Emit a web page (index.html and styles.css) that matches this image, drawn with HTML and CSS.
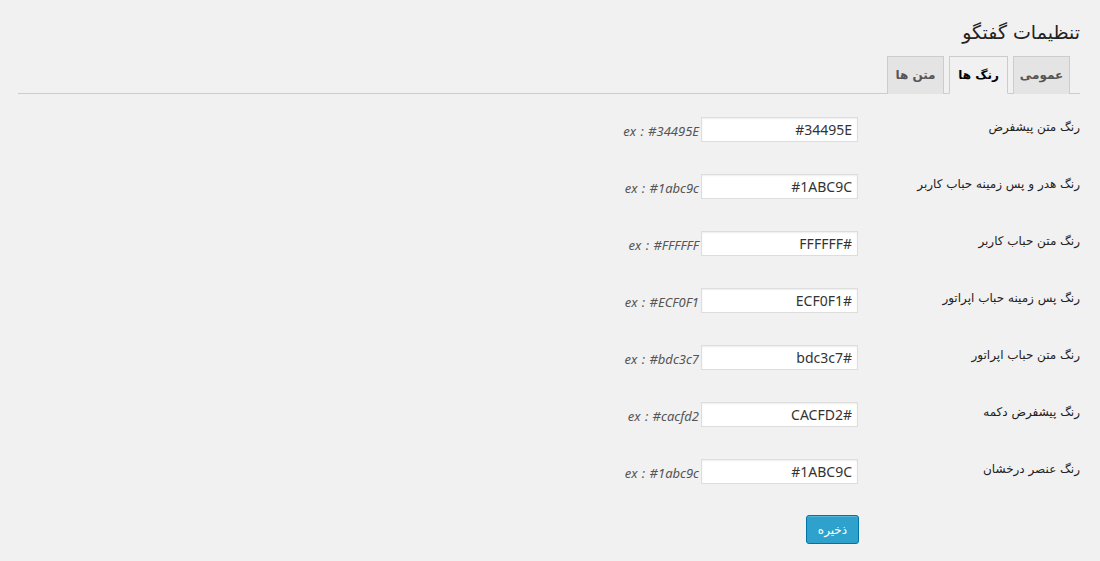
FILE: index.html
```html
<!DOCTYPE html>
<html lang="fa" dir="rtl">
<head>
  <meta charset="UTF-8">
  <title>تنظیمات گفتگو</title>
  <link rel="stylesheet" href="styles.css">
</head>
<body>

  <div class="wrap">
    <h2 class="page-title">تنظیمات گفتگو</h2>

    <div class="nav-tabs">
      <a class="nav-tab">عمومی</a>
      <a class="nav-tab active">رنگ ها</a>
      <a class="nav-tab">متن ها</a>
    </div>

    <!-- Colors tab -->
    <form class="form-table">
      <div class="row">
        <label class="row-label">رنگ متن پیشفرض</label>
        <input class="color-input" type="text" value="#34495E">
        <span class="hint" dir="ltr">ex : #34495E</span>
      </div>
      <div class="row">
        <label class="row-label">رنگ هدر و پس زمینه حباب کاربر</label>
        <input class="color-input" type="text" value="#1ABC9C">
        <span class="hint" dir="ltr">ex : #1abc9c</span>
      </div>
      <div class="row">
        <label class="row-label">رنگ متن حباب کاربر</label>
        <input class="color-input" type="text" value="#FFFFFF">
        <span class="hint" dir="ltr">ex : #FFFFFF</span>
      </div>
      <div class="row">
        <label class="row-label">رنگ پس زمینه حباب  اپراتور</label>
        <input class="color-input" type="text" value="#ECF0F1">
        <span class="hint" dir="ltr">ex : #ECF0F1</span>
      </div>
      <div class="row">
        <label class="row-label">رنگ متن حباب  اپراتور</label>
        <input class="color-input" type="text" value="#bdc3c7">
        <span class="hint" dir="ltr">ex : #bdc3c7</span>
      </div>
      <div class="row">
        <label class="row-label">رنگ پیشفرض دکمه</label>
        <input class="color-input" type="text" value="#CACFD2">
        <span class="hint" dir="ltr">ex : #cacfd2</span>
      </div>
      <div class="row">
        <label class="row-label">رنگ عنصر درخشان</label>
        <input class="color-input" type="text" value="#1ABC9C">
        <span class="hint" dir="ltr">ex : #1abc9c</span>
      </div>

      <div class="submit">
        <button type="button" class="button-primary">ذخیره</button>
      </div>
    </form>
  </div>

</body>
</html>
```

FILE: styles.css
```css
body {
  margin: 0;
  background: #f1f1f1;
  color: #333;
  font-family: "DejaVu Sans", Tahoma, sans-serif;
  font-size: 12px;
}
.wrap {
  padding: 0 20px 0 18px;
}
.page-title {
  margin: 0;
  padding: 17px 0 0;
  height: 39px;
  font-size: 19px;
  font-weight: normal;
  line-height: 30px;
  color: #222;
}
.nav-tabs {
  display: flex;
  gap: 5px;
  padding-right: 10px;
  border-bottom: 1px solid #ccc;
}
.nav-tab {
  display: block;
  width: 55px;
  padding: 6px 0;
  margin-bottom: -1px;
  line-height: 24px;
  text-align: center;
  font-size: 12px;
  font-weight: bold;
  color: #555;
  background: #e4e4e4;
  border: 1px solid #ccc;
  border-bottom: none;
  cursor: pointer;
}
.nav-tab.active {
  width: 57px;
  color: #000;
  background: #f1f1f1;
  border-bottom: 1px solid #f1f1f1;
}
.form-table {
  margin-top: 7px;
}
.row {
  display: flex;
  align-items: center;
  height: 57px;
}
.row-label {
  width: 212px;
  margin-left: 10px;
  margin-top: -5px;
  color: #222;
}
.color-input {
  width: 157px;
  height: 25px;
  box-sizing: border-box;
  padding: 0 5px;
  border: 1px solid #ddd;
  box-shadow: inset 0 1px 2px rgba(0, 0, 0, 0.07);
  background: #fff;
  color: #333;
  font-family: "Noto Sans", sans-serif;
  font-size: 14px;
  direction: rtl;
}
.hint {
  margin-right: 2px;
  margin-top: 2px;
  font-family: "Noto Sans", sans-serif;
  font-style: italic;
  font-size: 13px;
  word-spacing: 1px;
  color: #555;
}
.submit {
  padding: 15px 221px 0 0;
}
.button-primary {
  width: 53px;
  height: 29px;
  border: 1px solid #0074a2;
  border-radius: 3px;
  background: #2ea2cc;
  box-shadow: inset 0 1px 0 rgba(120, 200, 230, 0.5);
  color: #fff;
  font-family: "DejaVu Sans", sans-serif;
  font-size: 12px;
  cursor: pointer;
}
```
